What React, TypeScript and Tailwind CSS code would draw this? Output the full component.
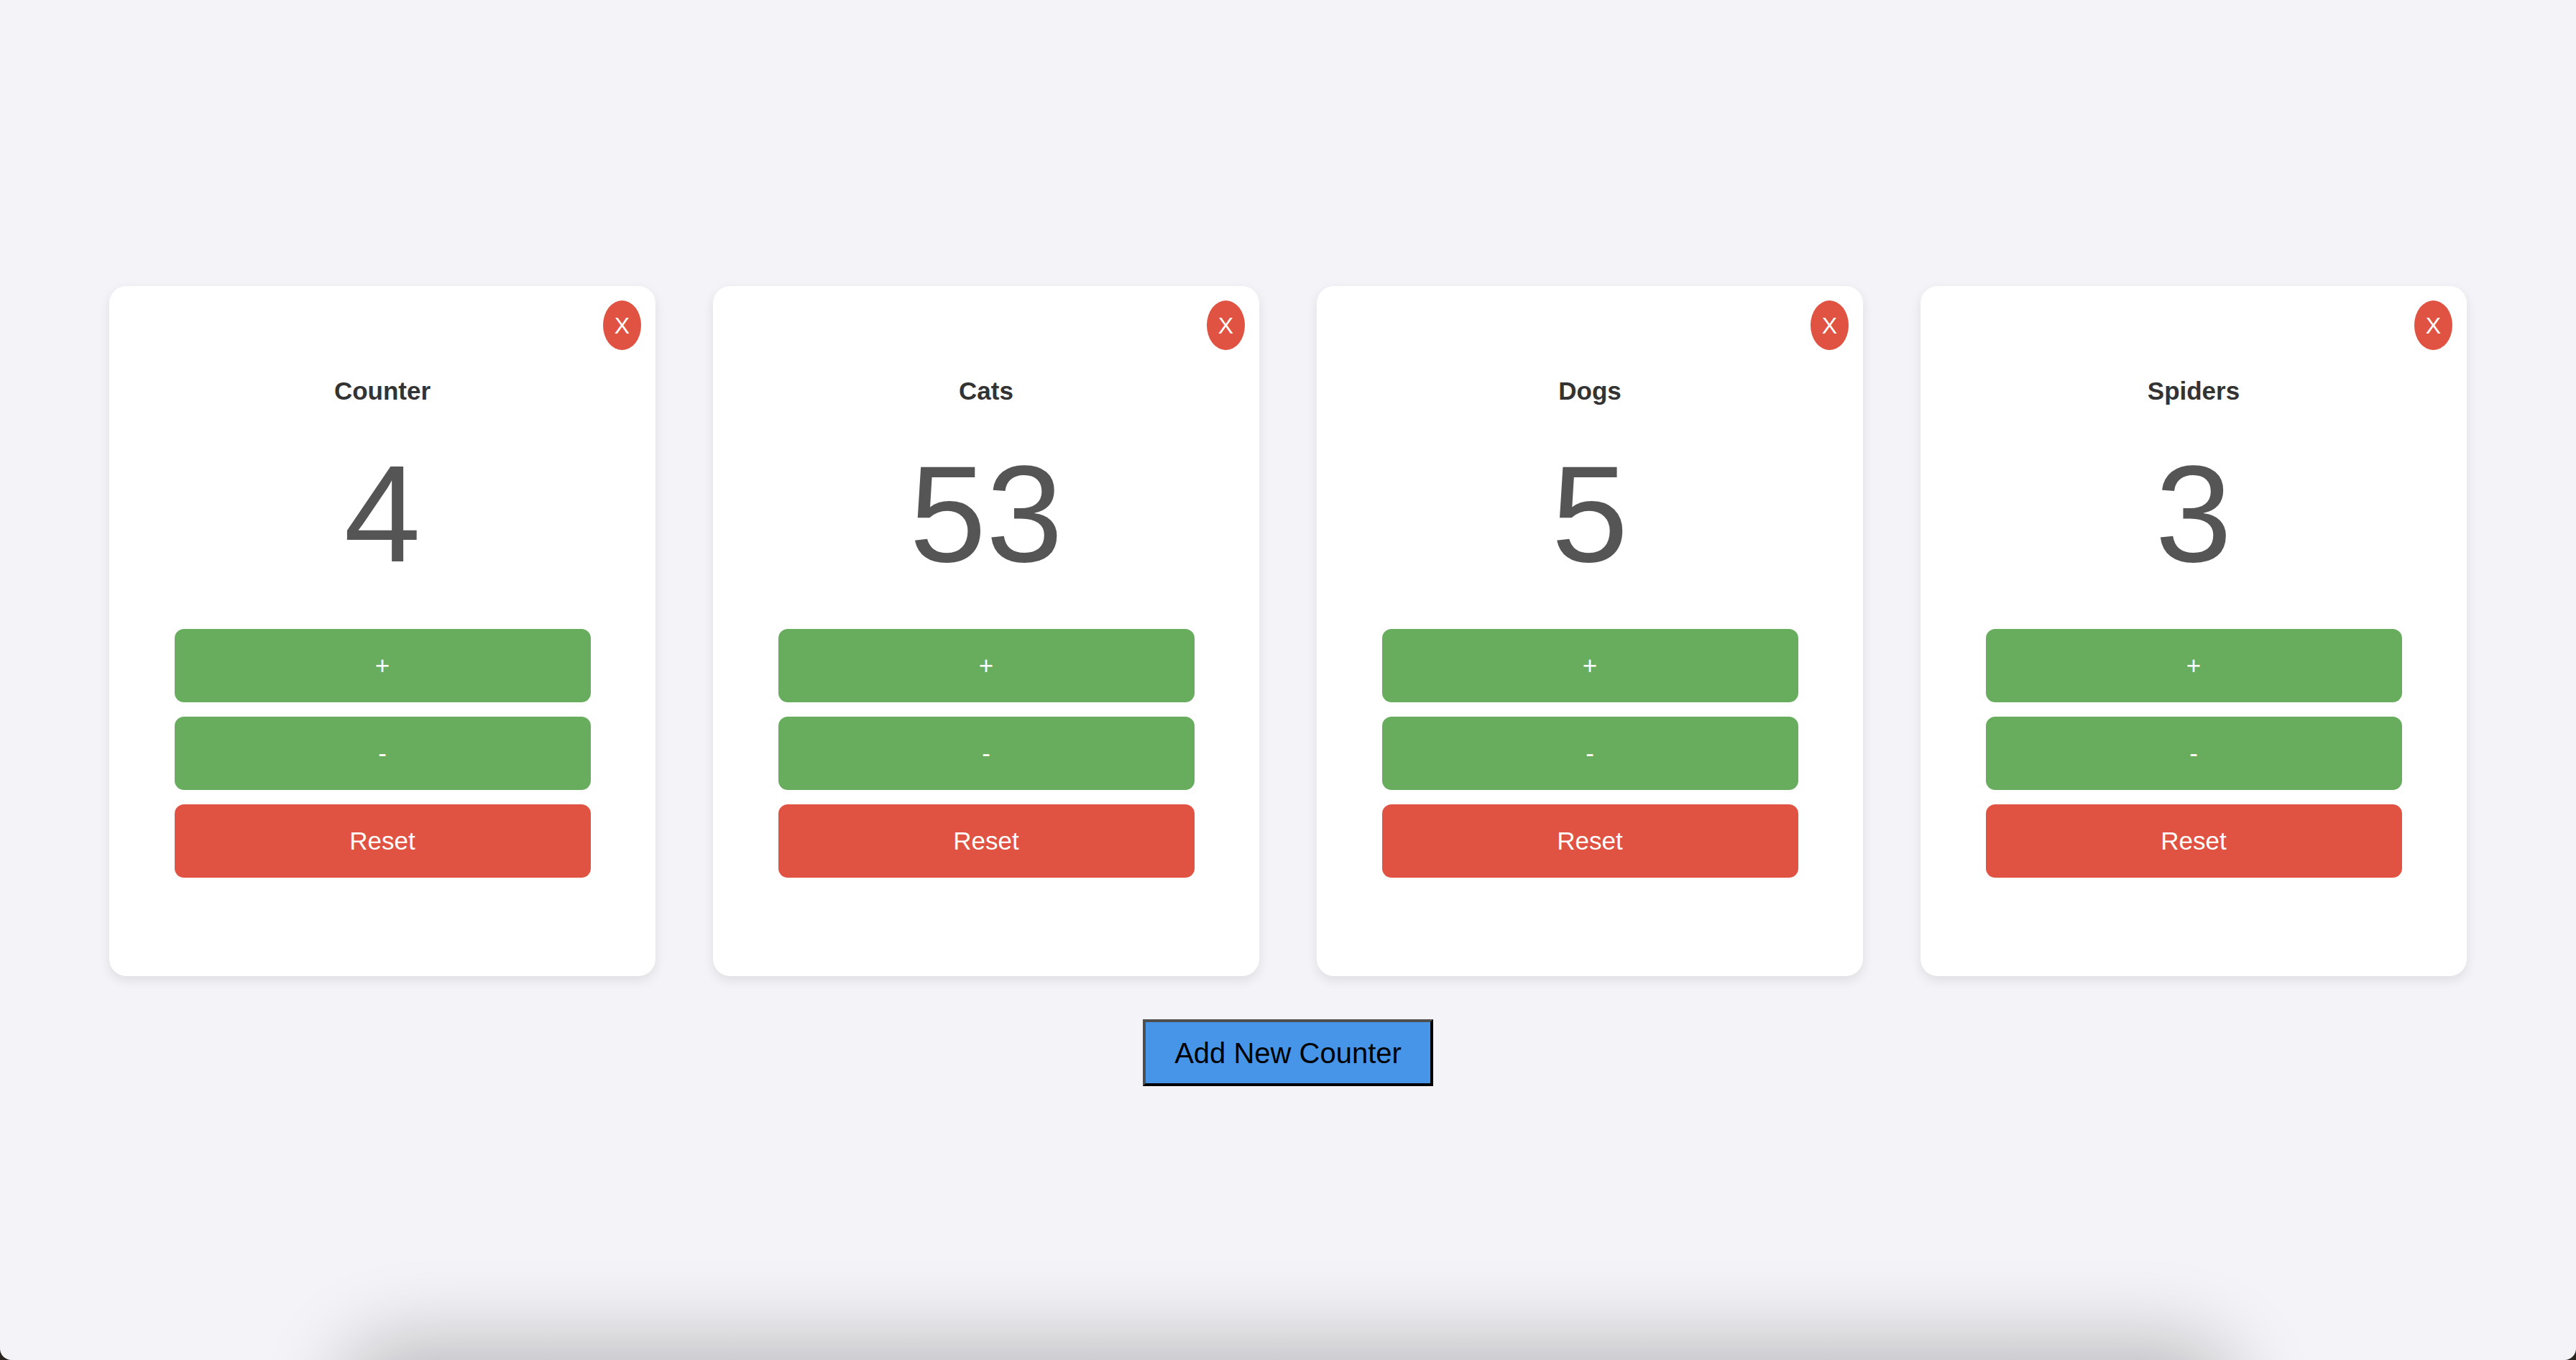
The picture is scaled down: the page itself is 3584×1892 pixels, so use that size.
import { useState } from "react";

type Counter = { id: number; name: string; value: number };

const initial: Counter[] = [
  { id: 1, name: "Counter", value: 4 },
  { id: 2, name: "Cats", value: 53 },
  { id: 3, name: "Dogs", value: 5 },
  { id: 4, name: "Spiders", value: 3 },
];

function CounterCard({
  counter,
  onChange,
  onRemove,
}: {
  counter: Counter;
  onChange: (v: number) => void;
  onRemove: () => void;
}) {
  return (
    <div className="relative w-[760px] h-[960px] bg-white rounded-[24px] shadow-[0_6px_16px_rgba(0,0,0,0.09)] flex flex-col items-center pt-[126px]">
      <button
        className="absolute top-[20px] right-[20px] w-[53px] h-[69px] rounded-[50%] bg-[#e05242] text-white text-[32px] leading-none flex items-center justify-center"
        onClick={onRemove}
      >
        X
      </button>
      <h2 className="text-[35px] leading-[39px] font-bold text-[#333333]">
        {counter.name}
      </h2>
      <p className="mt-[45px] text-[192px] leading-[214px] text-[#555555]">
        {counter.value}
      </p>
      <div className="mt-[53px] w-[579px] flex flex-col gap-[20px]">
        <button
          className="h-[102px] rounded-[13px] bg-[#68ad5e] text-white text-[35px]"
          onClick={() => onChange(counter.value + 1)}
        >
          +
        </button>
        <button
          className="h-[102px] rounded-[13px] bg-[#68ad5e] text-white text-[35px]"
          onClick={() => onChange(counter.value - 1)}
        >
          -
        </button>
        <button
          className="h-[102px] rounded-[13px] bg-[#e05242] text-white text-[35px]"
          onClick={() => onChange(0)}
        >
          Reset
        </button>
      </div>
    </div>
  );
}

export default function App() {
  const [counters, setCounters] = useState<Counter[]>(initial);

  const addCounter = () => {
    const id = Date.now();
    setCounters([...counters, { id, name: "Counter", value: 0 }]);
  };

  return (
    <div className="h-screen bg-[#2a2520] font-['Liberation_Sans',Arial,sans-serif]">
      <div className="relative h-full overflow-hidden rounded-b-[16px] bg-[#f4f4f8] flex flex-col items-center pt-[398px]">
        <div className="flex gap-[80px]">
          {counters.map((c) => (
            <CounterCard
              key={c.id}
              counter={c}
              onChange={(v) =>
                setCounters(
                  counters.map((x) => (x.id === c.id ? { ...x, value: v } : x))
                )
              }
              onRemove={() =>
                setCounters(counters.filter((x) => x.id !== c.id))
              }
            />
          ))}
        </div>
        <button
          className="mt-[60px] h-[93px] px-[40px] bg-[#4695e8] text-black text-[40px] border-4 border-t-[#4f4f4f] border-l-[#4f4f4f] border-b-black border-r-black"
          onClick={addCounter}
        >
          Add New Counter
        </button>
        {/* shadow of something just below the window */}
        <div className="absolute left-[500px] right-[500px] top-full h-[200px] rounded-[60px] bg-white shadow-[0_0_110px_30px_rgba(0,0,0,0.22)]" />
      </div>
    </div>
  );
}
